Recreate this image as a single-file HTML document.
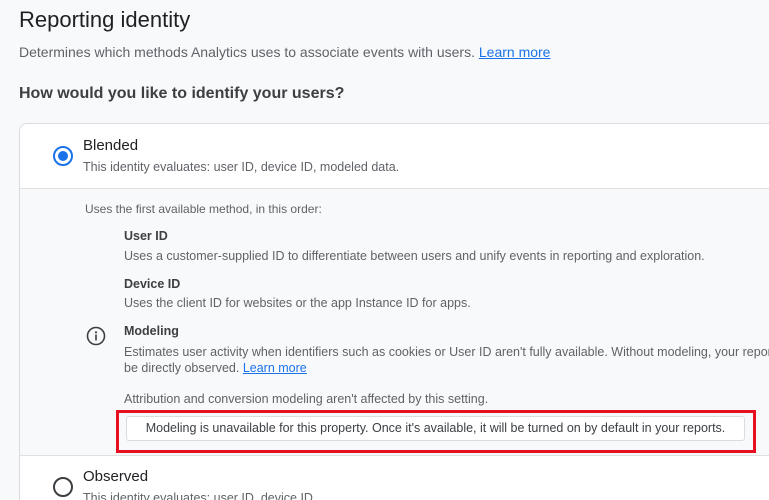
<!DOCTYPE html>
<html><head><meta charset="utf-8"><style>
*{margin:0;padding:0;box-sizing:border-box}
html,body{width:769px;height:500px;overflow:hidden}
body{background:#f8f9fa;font-family:"Liberation Sans",Arial,sans-serif;position:relative;color:#3c4043}
.t{position:absolute;white-space:nowrap;line-height:1}
a{color:#1a73e8;text-decoration:underline}
.card{position:absolute;left:19px;top:123px;width:780px;height:420px;border:1px solid #dadce0;border-radius:8px;background:#fff;overflow:hidden}
.gray{position:absolute;left:0;top:64px;width:100%;height:268px;background:#f8f9fa;border-top:1px solid #e0e0e0;border-bottom:1px solid #e0e0e0}
.s{font-size:12.5px;color:#5f6368}
.b{font-size:12.5px;font-weight:bold;color:#3c4043}
</style></head><body>
<div class="t" style="left:19px;top:9px;font-size:22px;color:#202124">Reporting identity</div>
<div class="t" style="left:19px;top:45px;font-size:14px;color:#5f6368">Determines which methods Analytics uses to associate events with users. <a>Learn more</a></div>
<div class="t" style="left:19px;top:86px;font-size:16px;font-weight:bold;color:#3c4043">How would you like to identify your users?</div>
<div class="card"><div class="gray"></div></div>
<svg style="position:absolute;left:52px;top:145px" width="22" height="22"><circle cx="11" cy="11" r="9" fill="none" stroke="#1a73e8" stroke-width="2"/><circle cx="11" cy="11" r="5" fill="#1a73e8"/></svg>
<div class="t" style="left:83px;top:138px;font-size:15px;color:#202124">Blended</div>
<div class="t s" style="left:83px;top:161px">This identity evaluates: user ID, device ID, modeled data.</div>
<div class="t s" style="left:85px;top:203px;font-size:12px">Uses the first available method, in this order:</div>
<div class="t b" style="left:124px;top:230px">User ID</div>
<div class="t s" style="left:124px;top:250px">Uses a customer-supplied ID to differentiate between users and unify events in reporting and exploration.</div>
<div class="t b" style="left:124px;top:278px">Device ID</div>
<div class="t s" style="left:124px;top:297px">Uses the client ID for websites or the app Instance ID for apps.</div>
<svg style="position:absolute;left:86px;top:326px" width="20" height="20"><circle cx="10" cy="10" r="8.5" fill="none" stroke="#3c4043" stroke-width="1.6"/><circle cx="10" cy="6.3" r="1.1" fill="#3c4043"/><rect x="9.2" y="8.5" width="1.6" height="6" fill="#3c4043"/></svg>
<div class="t b" style="left:124px;top:325px">Modeling</div>
<div class="t s" style="left:124px;top:346px">Estimates user activity when identifiers such as cookies or User ID aren't fully available. Without modeling, your reports</div>
<div class="t s" style="left:124px;top:362px">be directly observed. <a>Learn more</a></div>
<div class="t s" style="left:124px;top:393px">Attribution and conversion modeling aren't affected by this setting.</div>
<div style="position:absolute;left:126px;top:416px;width:619px;height:25px;background:#fff;border:1px solid #dadce0;border-radius:3px"></div>
<div class="t s" style="left:126px;top:422px;width:619px;text-align:center;color:#3c4043">Modeling is unavailable for this property. Once it's available, it will be turned on by default in your reports.</div>
<div style="position:absolute;left:116px;top:410px;width:640px;height:43px;border:3px solid #e8101f"></div>
<svg style="position:absolute;left:52px;top:476px" width="22" height="22"><circle cx="11" cy="11" r="9" fill="none" stroke="#3c4043" stroke-width="2"/></svg>
<div class="t" style="left:83px;top:469px;font-size:15px;color:#202124">Observed</div>
<div class="t s" style="left:83px;top:492px">This identity evaluates: user ID, device ID.</div>
</body></html>
